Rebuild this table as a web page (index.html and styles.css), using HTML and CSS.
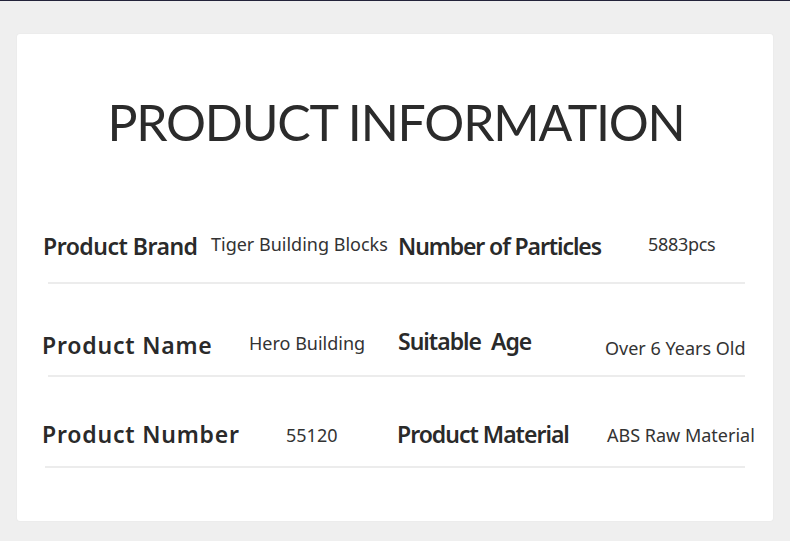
FILE: index.html
```html
<!DOCTYPE html>
<html lang="en">
<head>
<meta charset="utf-8">
<title>Product Information</title>
<link rel="stylesheet" href="styles.css">
</head>
<body>
<div class="topline"></div>
<main class="card">
  <h1 class="title">PRODUCT INFORMATION</h1>

  <div class="row row-1">
    <span class="label label-brand">Product Brand</span>
    <span class="value">Tiger Building Blocks</span>
    <span class="label label-tight label-particles">Number of Particles</span>
    <span class="value value-num">5883pcs</span>
  </div>
  <div class="divider divider-1"></div>

  <div class="row row-2">
    <span class="label label-wide">Product Name</span>
    <span class="value">Hero Building</span>
    <span class="label label-tight label-up">Suitable&nbsp; Age</span>
    <span class="value value-down">Over 6 Years Old</span>
  </div>
  <div class="divider divider-2"></div>

  <div class="row row-3">
    <span class="label label-wide">Product Number</span>
    <span class="value value-down-s">55120</span>
    <span class="label label-tight">Product Material</span>
    <span class="value value-down-s">ABS Raw Material</span>
  </div>
  <div class="divider divider-3"></div>
</main>
</body>
</html>
```

FILE: styles.css
```css
* {
  box-sizing: border-box;
}

html, body {
  margin: 0;
  padding: 0;
}

body {
  background: #efefef;
  font-family: "Noto Sans", "Open Sans", sans-serif;
  color: #2b2b2b;
  width: 790px;
  height: 541px;
  overflow: hidden;
}

.topline {
  height: 1px;
  background: #23233a;
}

.card {
  margin: 33px 17px 0 17px;
  width: 756px;
  height: 487px;
  background: #ffffff;
  border-radius: 3px;
  box-shadow: 0 0 2px rgba(0, 0, 0, 0.06);
  padding-top: 58px;
}

.title {
  margin: 0;
  font-family: "Lato", "Noto Sans", sans-serif;
  font-size: 50px;
  line-height: 60px;
  font-weight: 400;
  letter-spacing: -1.2px;
  text-align: center;
  color: #2b2b2b;
  padding-left: 2px;
}

.row {
  display: grid;
  align-items: center;
  height: 40px;
}

.row-1 {
  margin-top: 74px;
  grid-template-columns: 26px 168px 187px 250px 1fr;
}

.row-2 {
  margin-top: 41px;
  grid-template-columns: 25px 207px 149px 207px 1fr;
}

.row-3 {
  margin-top: 37px;
  grid-template-columns: 25px 244px 111px 210px 1fr;
}

.row > span:first-child {
  grid-column: 2;
}

.label {
  font-size: 23px;
  font-weight: 600;
  color: #2a2a2a;
  white-space: nowrap;
  letter-spacing: -1px;
}

.label-brand {
  letter-spacing: -0.5px;
}

.label-particles {
  letter-spacing: -1.1px;
}

.label-wide {
  letter-spacing: 0.8px;
}

.label-up {
  position: relative;
  top: -4px;
}

.value {
  font-size: 18px;
  font-weight: 400;
  color: #333333;
  white-space: nowrap;
  position: relative;
  top: -2px;
}

.value-num {
  letter-spacing: -0.3px;
}

.value-down {
  top: 3px;
}

.value-down-s {
  top: 1px;
}

.divider {
  height: 2px;
  background: #ececec;
}

.divider-1 {
  margin: 16px 0 0 31px;
  width: 697px;
}

.divider-2 {
  margin: 10px 0 0 31px;
  width: 697px;
}

.divider-3 {
  margin: 12px 0 0 28px;
  width: 700px;
}
```
